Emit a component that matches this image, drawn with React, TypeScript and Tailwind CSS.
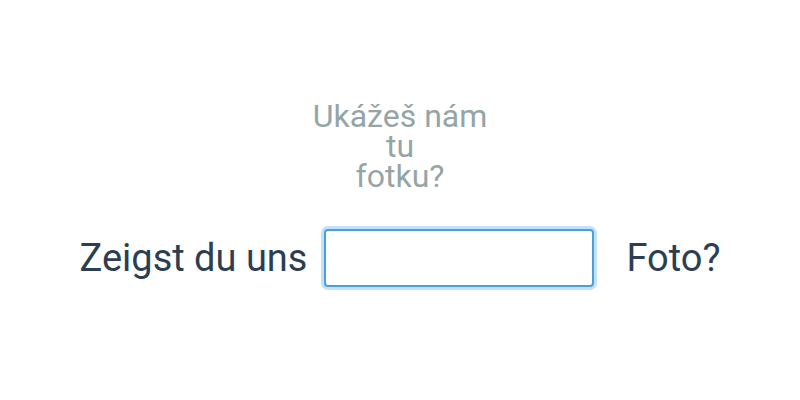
export default function App() {
  return (
    <div className="w-[800px] h-[400px] bg-white flex flex-col items-center font-['Roboto',sans-serif]">
      <div className="mt-[101px] text-center text-[32px] leading-[30px] text-[#95a5a6]">
        <div>Ukážeš nám</div>
        <div>tu</div>
        <div>fotku?</div>
      </div>
      <div className="mt-[38px] flex items-center text-[#2c3e50] text-[38px]">
        <span>Zeigst du uns</span>
        <input
          type="text"
          className="ml-[17px] mr-[32px] w-[270px] h-[58px] rounded-[4px] border-2 border-[#4a9fe0] outline-none ring-[3px] ring-[#c4e1f7] bg-white"
        />
        <span>Foto?</span>
      </div>
    </div>
  );
}
